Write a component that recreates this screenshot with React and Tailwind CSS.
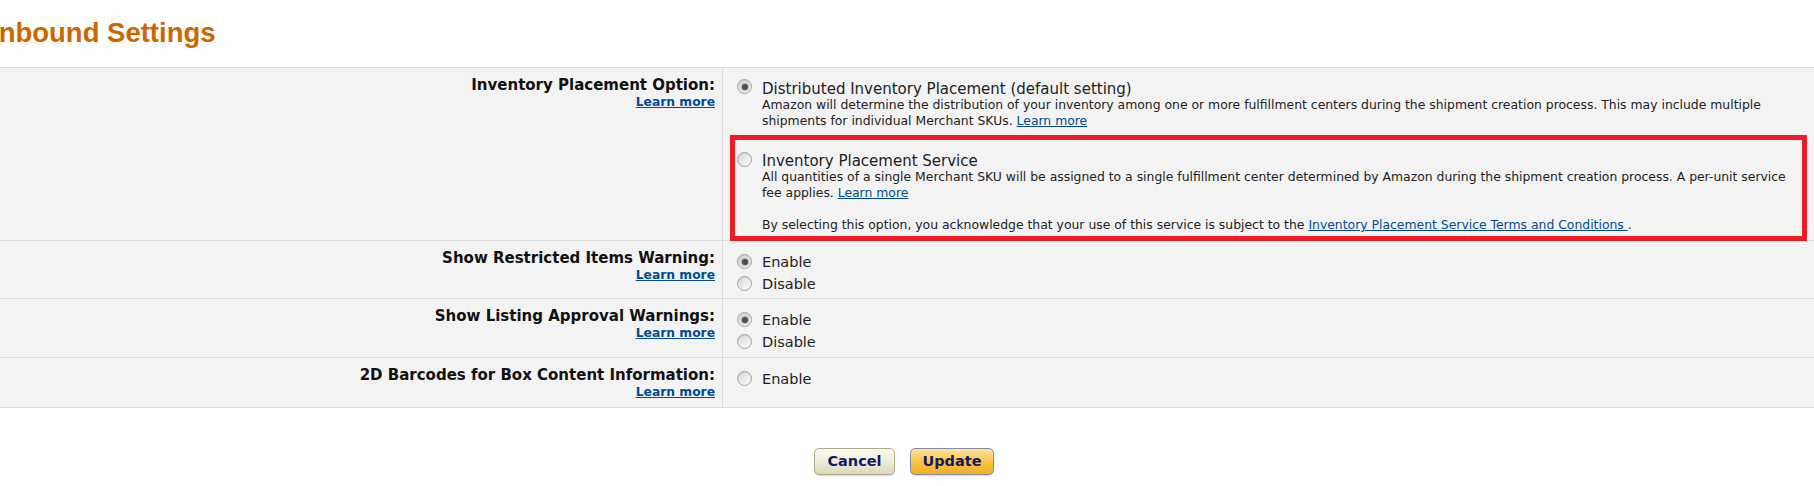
import React from 'react';

// Radio dot drawn with CSS, looks like the old Windows control
function Radio({ checked = false, className = '' }) {
  return (
    <span
      className={`flex h-[15px] w-[15px] shrink-0 items-center justify-center rounded-full border border-[#a4a4a4] bg-linear-to-br from-[#d4d4d4] via-[#ebebeb] to-[#fbfbfb] shadow-[inset_0_1px_1px_rgba(0,0,0,0.08)] ${className}`}
    >
      {checked && <span className="h-[6px] w-[6px] rounded-full bg-[#4f4f4f] shadow-[0_0_2px_1px_rgba(90,90,90,0.45)]" />}
    </span>
  );
}

function Label({ title }) {
  return (
    <div className="border-r border-[#dddddd] pt-[8px] pr-[7px] pb-[7px] text-right">
      <div className="text-[15px] leading-[18px] font-bold text-[#111]">{title}</div>
      <a className="block text-[12.3px] leading-[16px] font-bold text-[#004b91] underline">Learn more</a>
    </div>
  );
}

function Choice({ label, checked }) {
  return (
    <div className="flex items-start gap-[10px]">
      <Radio checked={checked} className="mt-[3px]" />
      <span className="text-[14.5px] leading-[22px] text-[#222]">{label}</span>
    </div>
  );
}

export default function App() {
  return (
    <div className="min-h-[486px] bg-white font-['DejaVu_Sans',sans-serif] text-[#222]">
      <h1 className="-ml-[9px] pt-[17px] text-[27.5px] leading-[32px] font-bold text-[#cc6600] font-['Liberation_Sans',Arial,sans-serif]">
        Inbound Settings
      </h1>

      <div className="mt-[18px] border-t border-[#dddddd] bg-[#f3f3f3]">
        {/* Inventory placement */}
        <div className="grid grid-cols-[723px_1fr] border-b border-[#dddddd]">
          <Label title="Inventory Placement Option:" />
          <div className="relative pt-[13px] pb-[7px] pl-[14px]">
            <div className="flex items-start gap-[10px]">
              <Radio checked className="-mt-[2px]" />
              <div className="whitespace-nowrap">
                <div className="text-[15px] leading-[16px] text-[#222]">Distributed Inventory Placement (default setting)</div>
                <div className="text-[12.4px] leading-[16px]">
                  Amazon will determine the distribution of your inventory among one or more fulfillment centers during the shipment creation process. This may include multiple
                  <br />
                  shipments for individual Merchant SKUs. <a className="text-[#004b91] underline">Learn more</a>
                </div>
              </div>
            </div>

            <div className="mt-[24px] flex items-start gap-[10px]">
              <Radio className="-mt-[1px]" />
              <div className="whitespace-nowrap">
                <div className="text-[15px] leading-[16px] text-[#222]">Inventory Placement Service</div>
                <div className="text-[12.4px] leading-[16px]">
                  All quantities of a single Merchant SKU will be assigned to a single fulfillment center determined by Amazon during the shipment creation process. A per-unit service
                  <br />
                  fee applies. <a className="text-[#004b91] underline">Learn more </a>
                  <br />
                  <br />
                  By selecting this option, you acknowledge that your use of this service is subject to the{' '}
                  <a className="text-[#004b91] underline">Inventory Placement Service Terms and Conditions </a>.
                </div>
              </div>
            </div>

            {/* red annotation frame */}
            <div className="pointer-events-none absolute top-[67px] right-[7px] left-[7px] h-[106px] border-[5px] border-[#ed1c24]" />
          </div>
        </div>

        {/* Restricted items */}
        <div className="grid grid-cols-[723px_1fr] border-b border-[#dddddd]">
          <Label title="Show Restricted Items Warning:" />
          <div className="pt-[10px] pb-[3px] pl-[14px]">
            <Choice label="Enable" checked />
            <Choice label="Disable" />
          </div>
        </div>

        {/* Listing approval */}
        <div className="grid grid-cols-[723px_1fr] border-b border-[#dddddd]">
          <Label title="Show Listing Approval Warnings:" />
          <div className="pt-[10px] pb-[4px] pl-[14px]">
            <Choice label="Enable" checked />
            <Choice label="Disable" />
          </div>
        </div>

        {/* 2D barcodes */}
        <div className="grid grid-cols-[723px_1fr] border-b border-[#dddddd]">
          <Label title="2D Barcodes for Box Content Information:" />
          <div className="pt-[10px] pl-[14px]">
            <Choice label="Enable" />
          </div>
        </div>
      </div>

      <div className="mt-[40px] flex justify-center gap-[15px] pr-[6px]">
        <button className="h-[27px] w-[81px] rounded-[5px] border border-[#aeab8c] bg-linear-to-b from-[#fbfaee] via-[#eeecd6] to-[#dcd9bb] text-[14.5px] font-bold text-[#101a68] shadow-[0_1px_1px_rgba(0,0,0,0.15)]">
          Cancel
        </button>
        <button className="h-[27px] w-[84px] rounded-[5px] border border-[#7f8cb0] bg-linear-to-b from-[#fde79a] via-[#f8c445] to-[#f2af1c] text-[14.5px] font-bold text-[#101a68] shadow-[0_1px_1px_rgba(0,0,0,0.15)]">
          Update
        </button>
      </div>
    </div>
  );
}
